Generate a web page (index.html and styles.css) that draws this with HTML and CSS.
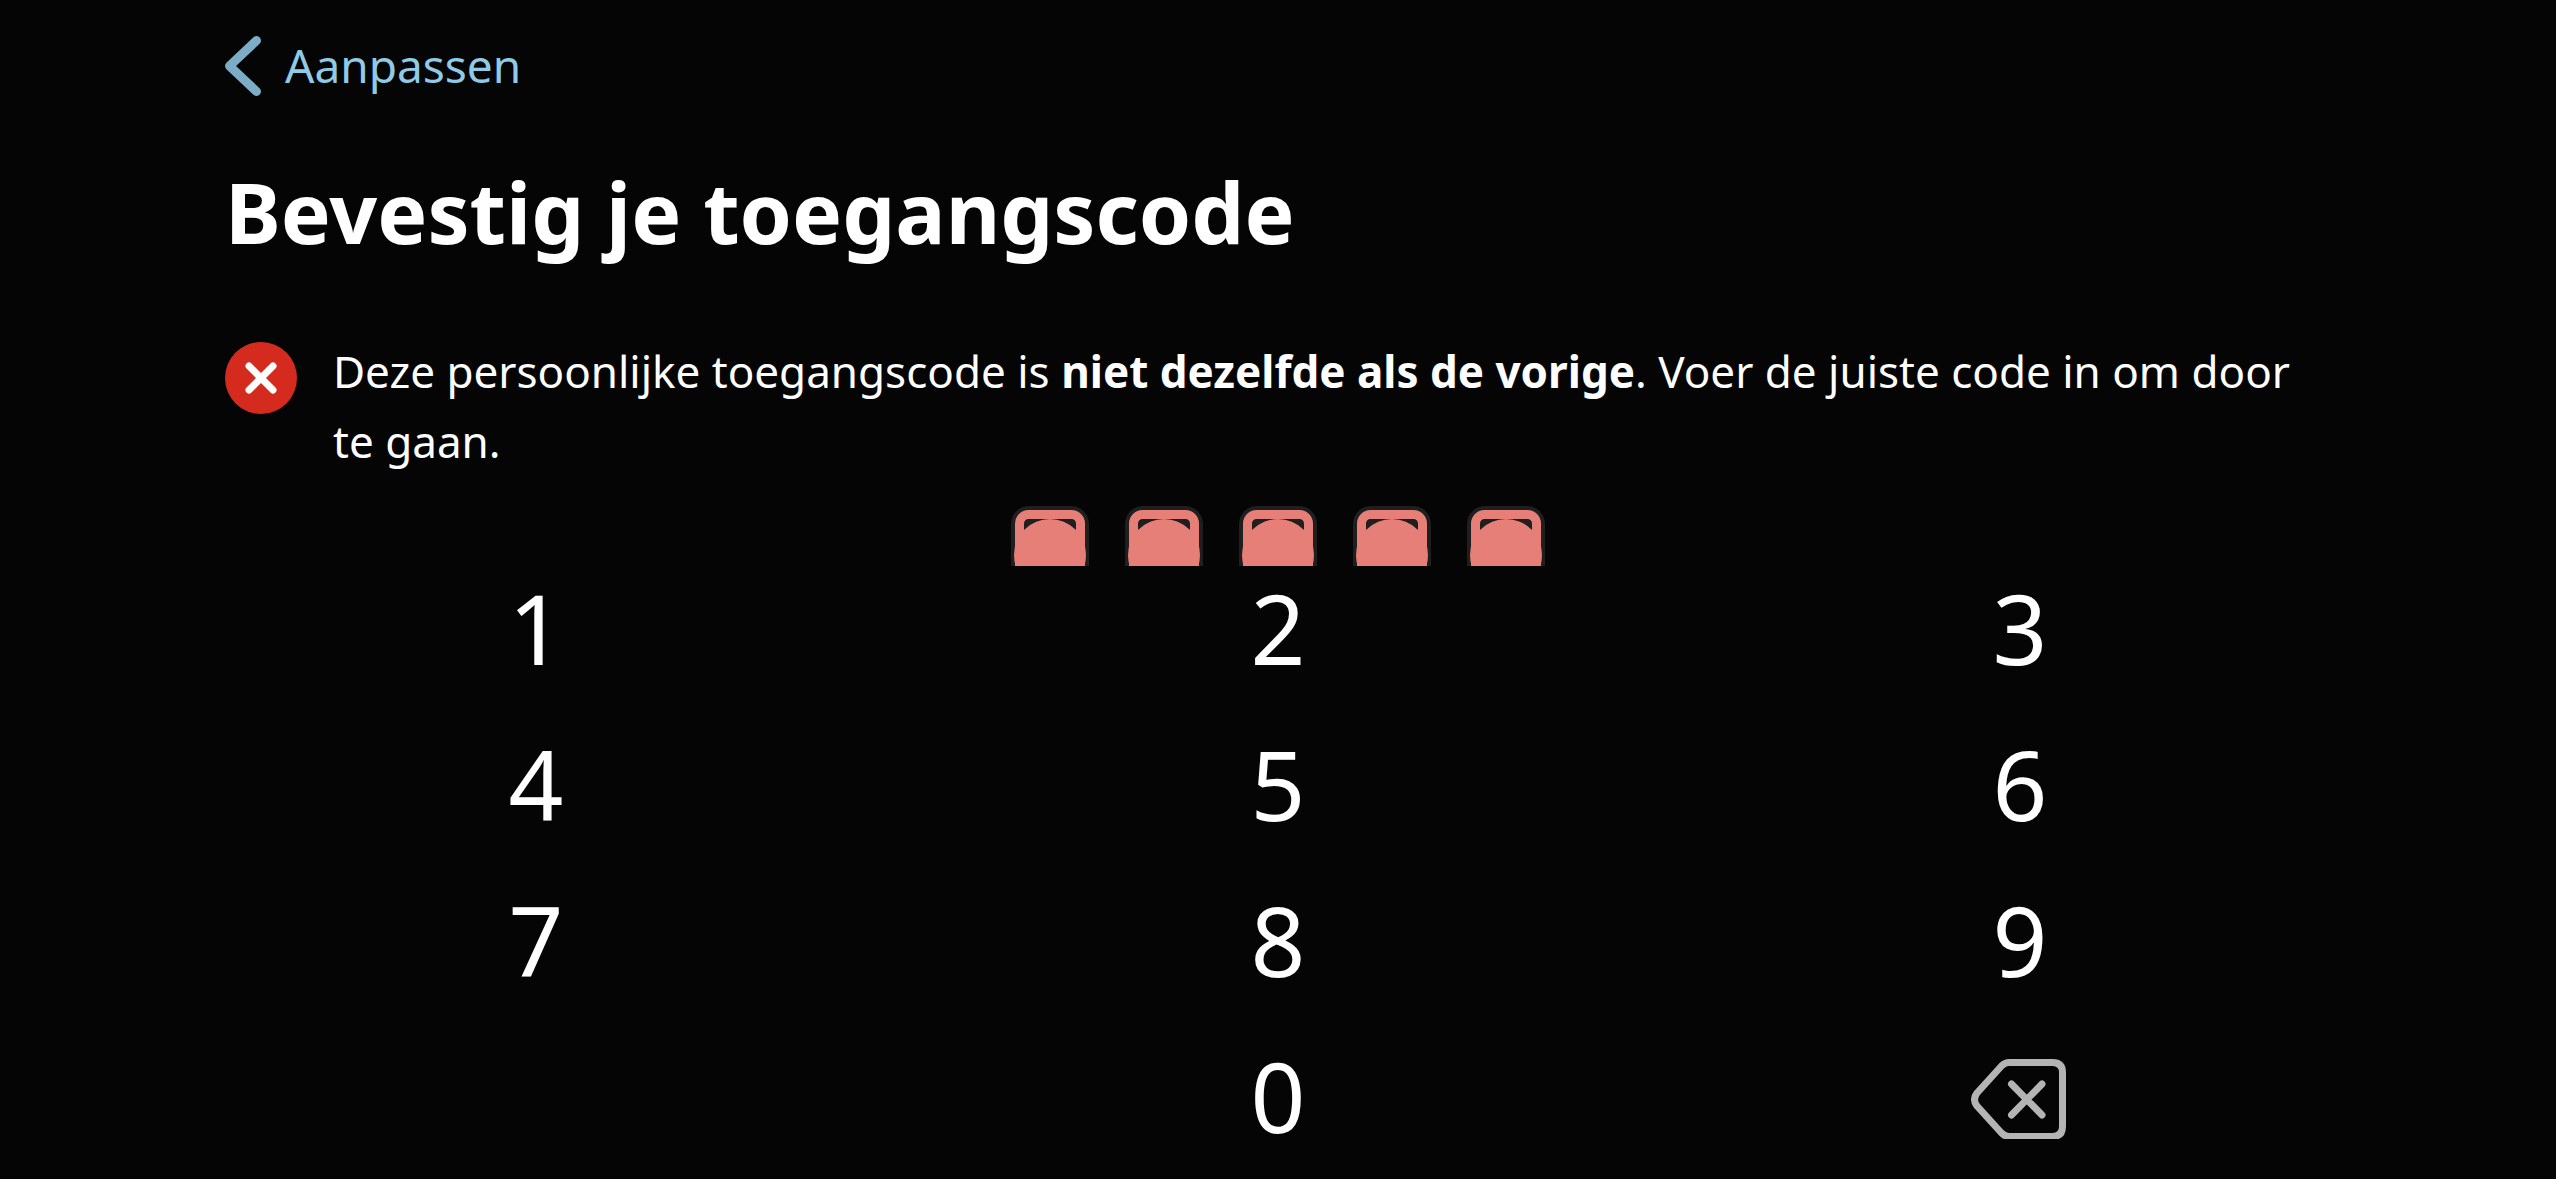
FILE: index.html
```html
<!DOCTYPE html>
<html lang="nl">
<head>
<meta charset="utf-8">
<meta name="viewport" content="width=device-width, initial-scale=1">
<title>Bevestig je toegangscode</title>
<link rel="stylesheet" href="styles.css">
</head>
<body>
<svg class="symbols" aria-hidden="true">
  <symbol id="slot" viewBox="0 0 78 108">
    <rect width="78" height="108" rx="18" fill="#1f1f1f"/>
    <rect x="8.5" y="8.5" width="61" height="91" rx="9" fill="none" stroke="#e67f78" stroke-width="9"/>
    <circle cx="39" cy="49" r="36" fill="#e67f78"/>
  </symbol>
</svg>
<header class="topbar">
  <a class="back" href="#">
    <svg class="back-icon" viewBox="0 0 36 60" aria-hidden="true"><path d="M31.500 4.500 4.500 30 31.500 55.500"/></svg>
    <span class="back-label">Aanpassen</span>
  </a>
</header>
<main>
  <div class="intro">
    <h1 class="title">Bevestig je toegangscode</h1>
    <div class="alert" role="alert">
      <svg class="alert-icon" viewBox="0 0 72 72" aria-hidden="true"><circle cx="36" cy="36" r="36"/><path d="M24 24 48 48M48 24 24 48"/></svg>
      <p class="alert-text">Deze persoonlijke toegangscode is <strong>niet dezelfde als de vorige</strong>. Voer de juiste code in om door te gaan.</p>
    </div>
  </div>
  <div class="code" role="img" aria-label="5 van 5 cijfers ingevuld">
    <svg class="slot"><use href="#slot"/></svg>
    <svg class="slot"><use href="#slot"/></svg>
    <svg class="slot"><use href="#slot"/></svg>
    <svg class="slot"><use href="#slot"/></svg>
    <svg class="slot"><use href="#slot"/></svg>
  </div>
  <div class="keypad">
    <button class="key" type="button">1</button>
    <button class="key" type="button">2</button>
    <button class="key" type="button">3</button>
    <button class="key" type="button">4</button>
    <button class="key" type="button">5</button>
    <button class="key" type="button">6</button>
    <button class="key" type="button">7</button>
    <button class="key" type="button">8</button>
    <button class="key" type="button">9</button>
    <button class="key key-zero" type="button">0</button>
    <button class="key" type="button" aria-label="Wissen">
      <svg class="erase-icon" viewBox="0 -5 100 86" aria-hidden="true"><path d="M39 4.500H82.500Q92.500 4.500 92.500 14.500V68.500Q92.500 78.500 82.500 78.500H39Q35 78.500 31.500 75L7 48Q2 41.500 7 35L31.500 8Q35 4.500 39 4.500ZM41.500 26 72 57M72 26 41.500 57"/></svg>
    </button>
  </div>
</main>
</body>
</html>
```
FILE: styles.css
```css
* {
  box-sizing: border-box;
}

body {
  margin: 0;
  background: #050505;
  color: #fff;
  font-family: "Noto Sans", "Open Sans", sans-serif;
}

.symbols {
  position: absolute;
  width: 0;
  height: 0;
}

.topbar {
  display: flex;
  padding: 30px 225px 0;
}

.back {
  display: flex;
  align-items: center;
  gap: 24px;
  height: 72px;
  color: #8fcae7;
  font-size: 46px;
  line-height: 70px;
  text-decoration: none;
}

.back-label {
  padding-bottom: 2px;
}

.back-icon {
  width: 36px;
  height: 60px;
  fill: none;
  stroke: #7dacc6;
  stroke-width: 9;
  stroke-linecap: round;
  stroke-linejoin: round;
}

.intro {
  padding: 44px 225px 0;
}

.title {
  margin: 0;
  font-size: 84px;
  font-weight: 700;
  line-height: 132px;
}

.alert {
  display: flex;
  align-items: flex-start;
  gap: 36px;
  margin-top: 58px;
}

.alert-icon {
  flex: none;
  width: 72px;
  height: 72px;
  margin-top: 6px;
  fill: #d52b1e;
}

.alert-icon path {
  stroke: #fff;
  stroke-width: 7;
  stroke-linecap: round;
}

.alert-text {
  margin: 0;
  font-size: 44px;
  line-height: 70px;
}

.code {
  display: flex;
  justify-content: center;
  gap: 36px;
  height: 60px;
  margin-top: 30px;
  overflow: hidden;
}

.slot {
  flex: none;
  width: 78px;
  height: 108px;
}

.keypad {
  display: grid;
  grid-template-columns: repeat(3, 1fr);
  gap: 30px 0;
  padding: 0 165px;
}

.key {
  display: flex;
  align-items: center;
  justify-content: center;
  height: 126px;
  padding: 0 0 2px;
  border: 0;
  background: none;
  color: inherit;
  font: inherit;
  font-size: 96px;
  line-height: 126px;
  cursor: pointer;
}

.key-zero {
  grid-column: 2;
}

.erase-icon {
  width: 100px;
  height: 86px;
  fill: none;
  stroke: #b4b4b4;
  stroke-width: 7;
  stroke-linecap: round;
  stroke-linejoin: round;
}
```
